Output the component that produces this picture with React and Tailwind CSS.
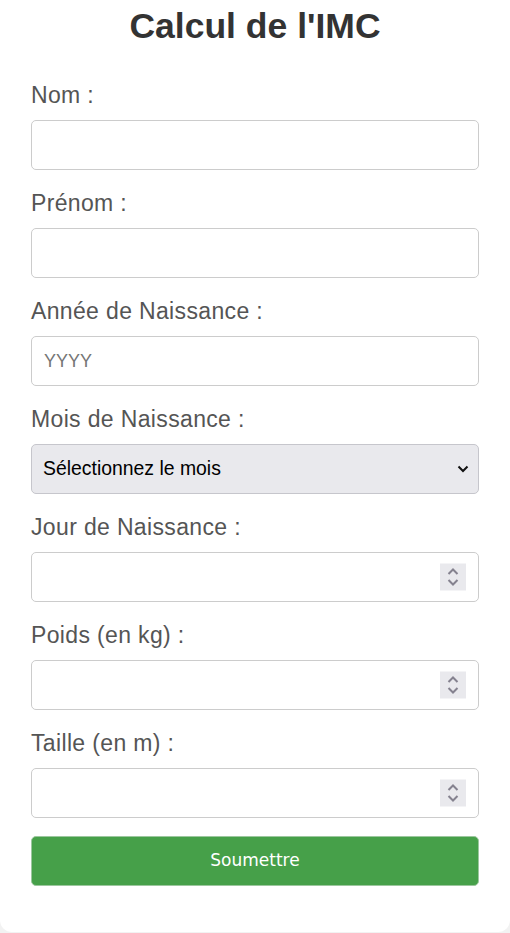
import React from "react";

const Spin = () => (
  <div className="absolute right-[13px] top-1/2 -translate-y-1/2 w-[26px] h-[27px] bg-[#e9e9ed] flex flex-col items-center justify-center gap-[3px]">
    <svg width="12" height="8" viewBox="0 0 12 8" fill="none">
      <path d="M1.5 6.5 L6 2 L10.5 6.5" stroke="#85828f" strokeWidth="2" />
    </svg>
    <svg width="12" height="8" viewBox="0 0 12 8" fill="none">
      <path d="M1.5 1.5 L6 6 L10.5 1.5" stroke="#85828f" strokeWidth="2" />
    </svg>
  </div>
);

const Label = ({ children }) => (
  <label className="block text-[23px] leading-[26px] text-[#555] mt-[20px] mb-[12px] tracking-[0.35px]">{children}</label>
);

const Input = ({ placeholder, spin }) => (
  <div className="relative">
    <input
      type="text"
      placeholder={placeholder}
      className="block w-full h-[50px] border border-[#ccc] rounded-[5px] px-[12px] text-[18px] text-[#333] placeholder:text-[#757575] bg-white outline-none"
    />
    {spin && <Spin />}
  </div>
);

export default function App() {
  return (
    <div className="min-h-[933px] bg-[#f2f2f2] font-['Liberation_Sans',Arial,sans-serif]">
      <div className="bg-white rounded-b-[12px] px-[31px] pb-[46px] w-[510px]">
        <h1 className="text-center text-[35.5px] font-bold text-[#333] leading-[41px] pt-[6px] mb-[35px]">Calcul de l'IMC</h1>
        <Label>Nom :</Label>
        <Input />
        <Label>Prénom :</Label>
        <Input />
        <Label>Année de Naissance :</Label>
        <Input placeholder="YYYY" />
        <Label>Mois de Naissance :</Label>
        <div className="relative h-[50px] border border-[#c6c6cc] rounded-[5px] bg-[#e9e9ed] flex items-center pl-[11px]">
          <span className="text-[19.4px] text-black">Sélectionnez le mois</span>
          <svg className="absolute right-[9px] top-1/2 -translate-y-1/2" width="12" height="8" viewBox="0 0 12 8" fill="none">
            <path d="M1.5 1.5 L6 6 L10.5 1.5" stroke="#111" strokeWidth="2" />
          </svg>
        </div>
        <Label>Jour de Naissance :</Label>
        <Input spin />
        <Label>Poids (en kg) :</Label>
        <Input spin />
        <Label>Taille (en m) :</Label>
        <Input spin />
        <button className="mt-[18px] w-full h-[50px] bg-[#46a049] border border-[#9cc79e] rounded-[5px] text-white text-[17px] font-['DejaVu_Sans',sans-serif]">
          Soumettre
        </button>
      </div>
    </div>
  );
}
